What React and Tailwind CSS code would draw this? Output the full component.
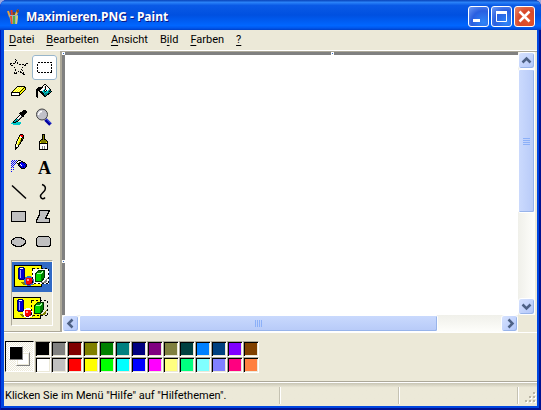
import React from 'react';

const INK = {
  k: '#000000',
  w: '#ffffff',
  y: '#ffff00',
  l: '#ffff99',
  o: '#808000',
  g: '#808080',
  s: '#c0c0c0',
  c: '#00c8c8',
  t: '#008080',
  b: '#0000ff',
  n: '#000080',
  r: '#ff0000',
  p: '#ffffc8',
};

function Pixels({ rows, x = 4, y = 4 }) {
  return (
    <svg width="25" height="25" viewBox="0 0 25 25" shapeRendering="crispEdges" aria-hidden="true">
      {rows.flatMap((row, j) =>
        [...row].map((ch, i) =>
          ch === '.' ? null : <rect key={`${i}-${j}`} x={x + i} y={y + j} width="1" height="1" fill={INK[ch]} />
        )
      )}
    </svg>
  );
}

function Drawing({ children }) {
  return (
    <svg width="25" height="25" viewBox="0 0 25 25" shapeRendering="crispEdges" fill="#c0c0c0" stroke="#000" aria-hidden="true">
      {children}
    </svg>
  );
}

const STAR = [
  '.......k........',
  '........k.......',
  'k......k........',
  '...kk....k......',
  '.k......k...kkk.',
  '....kk...kk.....',
  '..k...........k.',
  'k............k..',
  '.k..........k...',
  '..kk.......k....',
  '....k...........',
  '...........k....',
  '....k......kk...',
  '.......kk.......',
  '...k.kk..kk..k..',
  '...kk......k.k..',
];

const ERASER = [
  '......kkkkkkkk.',
  '.....kllylylykk',
  '....kylylylykyk',
  '...kylylylykyyk',
  '..kylylylykyyk.',
  '.kylylylykyyk..',
  'kkkkkkkkkyyk...',
  'kwwwwwwwkyk....',
  'kwwwwwwwkk.....',
  'kkkkkkkkk......',
];

const FILL = [
  '........kk......',
  '.......k.wk.....',
  '......kw.kwk....',
  '..kkkkkw.kwwk...',
  '.kkkkkwwwkwwwk..',
  'kkkkkwwwckwwwck.',
  'kkkkwwwckwkwctk.',
  'kk.kkkcctkcctktk',
  'kk..kkkctcccttk.',
  'kk...kkkctttkk..',
  'kk....kktttkk...',
  'kk.....kktk.....',
  'kk......kk......',
  '.k..............',
];

const PICKER = [
  '............kkk.',
  '...........kkkkk',
  '.........kkkkkkk',
  '........kkkkkkk.',
  '.........kkkkk..',
  '........kwkkk...',
  '.......kwwgkk...',
  '......kwwgk.....',
  '.....kwwgk......',
  '....kctgk.......',
  '...kctgk........',
  '..kctkk.........',
  '.ckkkccccc......',
  'cccccccccc......',
  '..ccccccc.......',
];

const PENCIL = [
  '.....kkk.',
  '....krrrk',
  '....kwrrk',
  '...kywwkk',
  '...kyykok',
  '..klyykk.',
  '..klyokk.',
  '.klyyok..',
  '.klyok...',
  '.klyok...',
  'klyok....',
  'kwwk.....',
  'kwpk.....',
  'kkk......',
  'kk.......',
  'k........',
];

const BRUSH = [
  '...kkk...',
  '...kok...',
  '...kok...',
  '...kok...',
  '...kok...',
  '..kkokk..',
  '.koooook.',
  'koooooook',
  'kyoooooyk',
  'kkkkkkkkk',
  'kwwwwwwwk',
  'kwwwwwwwk',
  'kwwgwgwwk',
  'kwwgwgwwk',
  'kwwgwgwwk',
  'kkkkkkkkk',
];

const SPRAY = [
  '.b.b.b.kkk......',
  'b.b.b.kwwwkk....',
  '.b.b.kwwkkbnkk..',
  'b.b.b.kkkbbbnbk.',
  '.b.b...kkwbbbnbk',
  'b.b....knbwbbbnk',
  '.b......knbbnbnk',
  'b.b......knbnbk.',
  '..........kkkk..',
  'b.b.............',
  '................',
  'b...............',
];

const TOOLS = [
  { name: 'Freihandauswahl', icon: (
    <Drawing>
      <path d="M8.500 4.500l3 5 8-.5-5 4.500 2.500 6-5-3.500-4.500 3.500 1-6-5-4.500 5-.5z" fill="none" strokeDasharray="2 1" />
    </Drawing>
  ) },
  {
    name: 'Auswahl',
    active: true,
    icon: (
      <Drawing>
        <rect x="5.5" y="7.500" width="14" height="10" fill="none" strokeDasharray="2 1" />
      </Drawing>
    ),
  },
  { name: 'Radierer', icon: <Pixels rows={ERASER} y={6} /> },
  { name: 'Farbfüller', icon: <Pixels rows={FILL} y={4} /> },
  { name: 'Farbauswahl', icon: <Pixels rows={PICKER} y={5} /> },
  {
    name: 'Lupe',
    icon: (
      <svg width="25" height="25" viewBox="0 0 25 25" aria-hidden="true">
        <path d="M13.500 14.500l5 5" stroke="#0000a0" strokeWidth="3.500" />
        <path d="M14 13.500l5 5" stroke="#5a78ff" strokeWidth="1" />
        <circle cx="10" cy="9.500" r="5.500" fill="#c0c0c8" stroke="#444" />
        <path d="M6.500 10a3.500 3.500 0 0 1 3.500-3.500" stroke="#fff" strokeWidth="1.500" fill="none" />
      </svg>
    ),
  },
  { name: 'Stift', icon: <Pixels rows={PENCIL} x={8} /> },
  { name: 'Pinsel', icon: <Pixels rows={BRUSH} x={7} /> },
  { name: 'Airbrush', icon: <Pixels rows={SPRAY} y={5} /> },
  { name: 'Text', icon: <span className="font-['Liberation_Serif',serif] text-[18px] leading-6 font-bold">A</span> },
  {
    name: 'Linie',
    icon: (
      <svg width="25" height="25" viewBox="0 0 25 25" aria-hidden="true">
        <path d="M5 5.500l14 13" stroke="#000" strokeWidth="1.500" />
      </svg>
    ),
  },
  {
    name: 'Kurve',
    icon: (
      <svg width="25" height="25" viewBox="0 0 25 25" aria-hidden="true">
        <path d="M10 4.500c3 1 4 3 3 5.500s-5 4-4.500 6.500 3 3 4.500 1" fill="none" stroke="#000" strokeWidth="1.500" />
      </svg>
    ),
  },
  { name: 'Rechteck', icon: <Drawing><rect x="4.5" y="6.500" width="14" height="10" /></Drawing> },
  {
    name: 'Vieleck',
    icon: <Drawing><path d="M7.500 5.500H17.500L13.500 13.500H17.500V17.500H4.500V15.500L7.500 9.500Z" /></Drawing>,
  },
  { name: 'Ellipse', icon: <Drawing><ellipse cx="11.5" cy="12" rx="7" ry="4.500" /></Drawing> },
  { name: 'Abgerundetes Rechteck', icon: <Drawing><rect x="4.5" y="6.500" width="14" height="10" rx="3" /></Drawing> },
];

const MENU = [
  ['', 'D', 'atei'],
  ['', 'B', 'earbeiten'],
  ['', 'A', 'nsicht'],
  ['B', 'i', 'ld'],
  ['', 'F', 'arben'],
  ['', '?', ''],
];

const COLORS = [
  ['Schwarz', 'bg-black'], ['Grau', 'bg-[#808080]'], ['Dunkelrot', 'bg-[#800000]'], ['Oliv', 'bg-[#808000]'],
  ['Grün', 'bg-[#008000]'], ['Petrol', 'bg-[#008080]'], ['Dunkelblau', 'bg-[#000080]'], ['Violett', 'bg-[#800080]'],
  ['Khaki', 'bg-[#808040]'], ['Tannengrün', 'bg-[#004040]'], ['Azurblau', 'bg-[#0080ff]'], ['Stahlblau', 'bg-[#004080]'],
  ['Purpur', 'bg-[#8000ff]'], ['Braun', 'bg-[#804000]'],
  ['Weiß', 'bg-white'], ['Hellgrau', 'bg-[#c0c0c0]'], ['Rot', 'bg-[#ff0000]'], ['Gelb', 'bg-[#ffff00]'],
  ['Hellgrün', 'bg-[#00ff00]'], ['Cyan', 'bg-[#00ffff]'], ['Blau', 'bg-[#0000ff]'], ['Magenta', 'bg-[#ff00ff]'],
  ['Hellgelb', 'bg-[#ffff80]'], ['Mintgrün', 'bg-[#00ff80]'], ['Helles Cyan', 'bg-[#80ffff]'], ['Flieder', 'bg-[#8080ff]'],
  ['Pink', 'bg-[#ff0080]'], ['Orange', 'bg-[#ff8040]'],
];

function PaintLogo() {
  return (
    <svg width="16" height="16" viewBox="0 0 16 16" aria-hidden="true">
      <path d="M4 8L2 2" stroke="#e8a23a" strokeWidth="2" />
      <path d="M6 8L5.500 1" stroke="#e23b1c" strokeWidth="2" />
      <path d="M8 8V3" stroke="#6a4a2a" strokeWidth="2" />
      <path d="M9 8l3-7" stroke="#f0c050" strokeWidth="2" />
      <path d="M10 1.500L12.500 0l.5 3-2 1z" fill="#8a4a1a" />
      <path d="M3 6h9l-1 9H5z" fill="#9fb4b8" />
      <path d="M4 7h2l.5 8H5z" fill="#e5532a" />
      <path d="M7 7h2v8H7z" fill="#4fae4a" />
      <path d="M10 7h2l-1 8h-1z" fill="#d8d070" />
    </svg>
  );
}

function CaptionButton({ name, danger, children }) {
  return (
    <button
      type="button"
      aria-label={name}
      className={`size-[21px] rounded-[3px] border border-white ${
        danger
          ? 'bg-[radial-gradient(circle_at_70%_70%,#e2552b,#d8482a_50%,#e88a6c)]'
          : 'bg-[radial-gradient(circle_at_75%_80%,#2f86f8,#2a5fe0_55%,#6f9bf5)]'
      }`}
    >
      <svg width="19" height="19" viewBox="0 0 19 19" fill="none" stroke="#fff" aria-hidden="true">
        {children}
      </svg>
    </button>
  );
}

function ScrollButton({ name, path }) {
  return (
    <button
      type="button"
      aria-label={name}
      className="flex size-[17px] shrink-0 items-center justify-center rounded-[3px] border border-white bg-linear-to-br from-[#d6e2fe] to-[#b2c6f9] shadow-[inset_-1px_-1px_0_#98b4ea]"
    >
      <svg width="15" height="15" viewBox="0 0 15 15" fill="none" stroke="#4d6185" strokeWidth="2.500" aria-hidden="true">
        <path d={path} />
      </svg>
    </button>
  );
}

function SampleMode({ name, active }) {
  return (
    <button type="button" aria-label={name} className={`block h-[30px] w-full ${active ? 'bg-[#316ac5]' : ''}`}>
      <svg width="40" height="30" viewBox={active ? '0 0 40 30' : '1 -2 40 30'} shapeRendering="crispEdges" aria-hidden="true">
        <rect x="2.5" y="3.500" width="27" height="21" fill="#ffff00" stroke="#000" />
        <path d="M8 20h12l2 1v2H11z" fill="#808000" />
        <path d="M7.500 5.500h4l1 1v10l-1 1h-4l-1-1v-10z" fill="#0000d0" stroke="#000060" />
        <path d="M8 6.500h3" stroke="#fff" />
        <path d="M8.500 8v8" stroke="#a0a0ff" />
        {active && <rect x="20" y="7" width="17" height="15" fill="#fff" />}
        <path d="M29 20h3l3-4h1l-2 5h-6z" fill={active ? '#808080' : '#808000'} />
        <circle cx="17" cy="19" r="5" fill={active ? '#316ac5' : '#fff'} />
        <circle cx="17" cy="19" r="3.500" fill="#ff0000" />
        <path d="M15 22h3l2-2v-2" fill="none" stroke="#800040" />
        <rect x="15" y="17" width="2" height="2" fill="#ff9c9c" />
        <path d="M23.500 11.500l3-3h6v7l-3 4h-6z" fill="#008000" stroke="#003000" />
        <rect x="24" y="12" width="5" height="7" fill="#00d800" />
        <path d="M25 11.500h4l2-2" fill="none" stroke="#a0ffa0" />
        <rect x="20.5" y="6.500" width="16" height="15" fill="none" stroke="#000" strokeDasharray="2 2" />
      </svg>
    </button>
  );
}

function Toolbox() {
  return (
    <aside aria-label="Werkzeuge" className="w-[57px] shrink-0 border-r border-b border-[#aca899] pt-1 pl-[3px]">
      <div className="grid w-[50px] grid-cols-2">
        {TOOLS.map((tool) => (
          <button
            key={tool.name}
            type="button"
            aria-label={tool.name}
            className={`flex size-[25px] items-center justify-center rounded-[3px] ${
              tool.active ? 'bg-white outline-1 -outline-offset-1 outline-[#98b5c9]' : ''
            }`}
          >
            {tool.icon}
          </button>
        ))}
      </div>
      <div className="mt-[5px] ml-1 w-[42px] border border-t-[#aca899] border-r-white border-b-white border-l-[#aca899] pt-px pb-[3px]">
        <SampleMode name="Deckend" active />
        <SampleMode name="Transparent" />
      </div>
    </aside>
  );
}

function Canvas() {
  const handle = 'absolute size-[3px] border border-white bg-[#316ac5]';
  return (
    <main className="flex min-w-0 flex-1 flex-col border-t border-l border-[#aca899] pr-[2px]">
      <div className="flex min-h-0 flex-1">
        <div className="relative flex-1 bg-[#808080] pt-[3px] pl-[3px]">
          <div role="img" aria-label="Zeichenfläche" className="h-full bg-white" />
          <i className={`${handle} top-0 left-0`} />
          <i className={`${handle} top-0 left-[59%]`} />
          <i className={`${handle} top-[79%] left-0`} />
        </div>
        <div className="flex w-[17px] flex-col bg-linear-to-r from-[#f0f0ea] to-[#fefefb]">
          <ScrollButton name="Nach oben" path="M3.500 9.500l4-4 4 4" />
          <div className="flex-1">
            <div className="flex h-[63%] flex-col items-center justify-center gap-px rounded-[2px] border border-white bg-linear-to-r from-[#cbdafd] to-[#b7caf8] shadow-[inset_-1px_-1px_0_#98b4ea]">
              {[0, 1, 2, 3].map((n) => (
                <span key={n} className="h-px w-[7px] bg-[#8cb0f8]" />
              ))}
            </div>
          </div>
          <ScrollButton name="Nach unten" path="M3.500 5.500l4 4 4-4" />
        </div>
      </div>
      <div className="flex h-[17px] pr-[17px]">
        <div className="flex flex-1 bg-linear-to-b from-[#f0f0ea] to-[#fefefb]">
          <ScrollButton name="Nach links" path="M9.500 3.500l-4 4 4 4" />
          <div className="flex flex-1">
            <div className="flex w-[85%] items-center justify-center gap-px rounded-[2px] border border-white bg-linear-to-b from-[#c9d9fd] to-[#b7caf8] shadow-[inset_-1px_-1px_0_#98b4ea]">
              {[0, 1, 2, 3].map((n) => (
                <span key={n} className="h-[7px] w-px bg-[#8cb0f8]" />
              ))}
            </div>
          </div>
          <ScrollButton name="Nach rechts" path="M6.500 3.500l4 4-4 4" />
        </div>
      </div>
    </main>
  );
}

export default function App() {
  return (
    <div className="min-h-screen bg-[#9aa8e0]">
      <div className="flex min-h-screen flex-col rounded-t-[7px] bg-[#0046e0] font-[Roboto,sans-serif] text-[11px] text-black shadow-[inset_1px_0_0_#0019b8,inset_-2px_0_0_#001290,inset_0_-2px_0_#001290]">
        <header className="flex h-[30px] items-center gap-1 rounded-t-[7px] bg-[linear-gradient(#0842b8,#2a82f8_8%,#0a5ae6_18%,#0050e0_50%,#0066ff_85%,#0058ee_93%,#0040c8)] pt-[3px] pr-1.5 pl-1.5">
          <PaintLogo />
          <h1 className="flex-1 font-['Noto_Sans',sans-serif] text-[12px] leading-4 font-bold text-white [text-shadow:1px_1px_#0a1883]">
            Maximieren.PNG - Paint
          </h1>
          <div className="flex gap-0.5">
            <CaptionButton name="Minimieren"><path d="M4 13.500h7" strokeWidth="3" /></CaptionButton>
            <CaptionButton name="Maximieren"><path d="M4.500 4v10.500h10V4" /><path d="M4 5.500h11" strokeWidth="3" /></CaptionButton>
            <CaptionButton name="Schließen" danger><path d="M4.500 4.500l10 10M14.500 4.500l-10 10" strokeWidth="2.500" /></CaptionButton>
          </div>
        </header>

        <div className="mx-1 mb-1 flex flex-1 flex-col bg-[#ece9d8]">
          <nav aria-label="Menü" className="flex h-[21px] gap-3 border-b border-white px-[5px]">
            {MENU.map(([before, key, after]) => (
              <button key={key} type="button" className="h-[19px] leading-[19px]">
                {before}
                <span className="underline underline-offset-2">{key}</span>
                {after}
              </button>
            ))}
          </nav>

          <div className="flex flex-1">
            <Toolbox />
            <Canvas />
          </div>

          <section aria-label="Palette" className="flex h-[50px] border-t border-white border-b border-b-[#aca899] pt-2">
            <div className="mr-px ml-px flex h-[31px] w-[29px] border border-t-black border-r-white border-b-white border-l-black bg-[repeating-conic-gradient(#ffffff_0_25%,#ece9d8_0_50%)] bg-size-[2px_2px]">
              <div className="relative mt-1 ml-[3px] size-[14px]">
                <span className="absolute top-[6px] left-[7px] size-[14px] border border-r-[#808080] border-b-[#808080] border-white bg-white ring-1 ring-[#ece9d8] ring-inset" />
                <span className="absolute top-0 left-0 size-[14px] border border-r-[#808080] border-b-[#808080] border-white bg-black" />
              </div>
            </div>
            <div className="grid h-8 grid-cols-14">
              {COLORS.map(([name, fill]) => (
                <button
                  key={name}
                  type="button"
                  aria-label={name}
                  className={`size-4 border border-t-[#aca899] border-r-white border-b-white border-l-[#aca899] shadow-[inset_1px_1px_0_#000,inset_-1px_-1px_0_#ece9d8] ${fill}`}
                />
              ))}
            </div>
          </section>

          <footer className="flex h-6 border-t border-white bg-linear-to-b from-[#c8c5b4] via-[#ece9d8] via-20% to-[#ece9d8] pt-1">
            <p className="min-w-0 flex-1 pl-px leading-[18px] whitespace-nowrap">
              Klicken Sie im Menü &quot;Hilfe&quot; auf &quot;Hilfethemen&quot;.
            </p>
            <div className="mb-0.5 w-[119px] border-l border-[#c5c2b2] shadow-[inset_1px_0_0_#fff]" />
            <div className="mb-0.5 w-[119px] border-l border-[#c5c2b2] shadow-[inset_1px_0_0_#fff]" />
            <div className="mb-0.5 flex w-5 items-end justify-end border-l border-[#c5c2b2] shadow-[inset_1px_0_0_#fff]">
              <svg width="12" height="12" viewBox="0 0 12 12" shapeRendering="crispEdges" aria-hidden="true">
                {[[8, 0], [4, 4], [8, 4], [0, 8], [4, 8], [8, 8]].map(([x, y]) => (
                  <g key={`${x}-${y}`}>
                    <rect x={x + 1} y={y + 1} width="2" height="2" fill="#fff" />
                    <rect x={x} y={y} width="2" height="2" fill="#b8b4a3" />
                  </g>
                ))}
              </svg>
            </div>
          </footer>
        </div>
      </div>
    </div>
  );
}
